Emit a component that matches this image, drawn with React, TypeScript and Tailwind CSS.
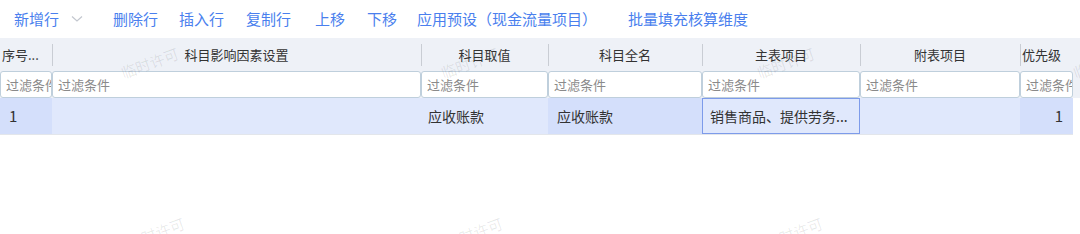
import React from "react";

const cols = [
  { w: 52, title: "序号...", align: "left" },
  { w: 369, title: "科目影响因素设置", align: "center" },
  { w: 127, title: "科目取值", align: "center" },
  { w: 154, title: "科目全名", align: "center" },
  { w: 158, title: "主表项目", align: "center" },
  { w: 160, title: "附表项目", align: "center" },
  { w: 53, title: "优先级", align: "left" },
];

const wm = [
  { x: 120, y: 52 },
  { x: 440, y: 52 },
  { x: 756, y: 52 },
  { x: 1072, y: 52 },
  { x: 126, y: 222 },
  { x: 444, y: 222 },
  { x: 764, y: 222 },
  { x: 1078, y: 222 },
];

export default function App() {
  const font = { fontFamily: '"Noto Sans CJK SC", "Noto Sans", sans-serif' };
  return (
    <div className="relative w-[1080px] h-[234px] bg-white overflow-hidden" style={font}>
      {/* toolbar */}
      <div className="flex items-center h-[38px] pl-[14px] text-[15px] text-[#4a7fee] bg-white">
        <span>新增行</span>
        <svg className="ml-[12px]" width="12" height="8" viewBox="0 0 12 8">
          <path d="M1 1.5 L6 6 L11 1.5" fill="none" stroke="#c3c7cf" strokeWidth="1.2" />
        </svg>
        <span className="ml-[30px]">删除行</span>
        <span className="ml-[21px]">插入行</span>
        <span className="ml-[22px]">复制行</span>
        <span className="ml-[24px]">上移</span>
        <span className="ml-[22px]">下移</span>
        <span className="ml-[20px]">应用预设（现金流量项目）</span>
        <span className="ml-[31px]">批量填充核算维度</span>
      </div>
      {/* header */}
      <div className="bg-[#eef1f7]">
        <div className="flex h-[33px] text-[13px] text-[#333]">
          {cols.map((c, i) => (
            <div
              key={i}
              className={`flex items-center h-full ${c.align === "center" ? "justify-center" : "justify-start pl-[2px]"} relative`}
              style={{ width: c.w }}
            >
              {i > 0 && <div className="absolute left-0 top-[6px] h-[22px] w-px bg-[#c9cdd4]" />}
              <span className="whitespace-nowrap">{c.title}</span>
            </div>
          ))}
        </div>
        {/* filter row */}
        <div className="flex h-[27px]">
          {cols.map((c, i) => (
            <div
              key={i}
              className="h-full bg-white border border-[#bfcfdc] rounded-[3px] flex items-center pl-[5px] text-[13px] text-[#8a8a8a] whitespace-nowrap overflow-hidden"
              style={{ width: c.w }}
            >
              过滤条件
            </div>
          ))}
        </div>
      </div>
      {/* data row */}
      <div className="flex h-[37px] w-[1073px] text-[14px] text-[#333] border-b border-[#e3e6eb]">
        <div className="w-[52px] bg-[#d4dffb] flex items-center pl-[9px] text-[15px]">1</div>
        <div className="w-[369px] bg-[#e0e8fc]" />
        <div className="w-[127px] bg-[#e0e8fc] flex items-center pl-[7px]">应收账款</div>
        <div className="w-[154px] bg-[#d4dffb] flex items-center pl-[9px]">应收账款</div>
        <div className="w-[158px] bg-[#e0e8fc] border-[1.5px] border-[#7d9bea] flex items-center pl-[7px] whitespace-nowrap">
          销售商品、提供劳务...
        </div>
        <div className="w-[160px] bg-[#e0e8fc]" />
        <div className="w-[53px] bg-[#d4dffb] flex items-center justify-end pr-[10px] text-[15px]">1</div>
      </div>
      {/* watermarks */}
      {wm.map((p, i) => (
        <div
          key={i}
          className="absolute text-[15px] text-[rgba(0,0,0,0.09)] whitespace-nowrap pointer-events-none origin-center -rotate-[20deg]"
          style={{ left: p.x, top: p.y }}
        >
          临时许可
        </div>
      ))}
    </div>
  );
}
